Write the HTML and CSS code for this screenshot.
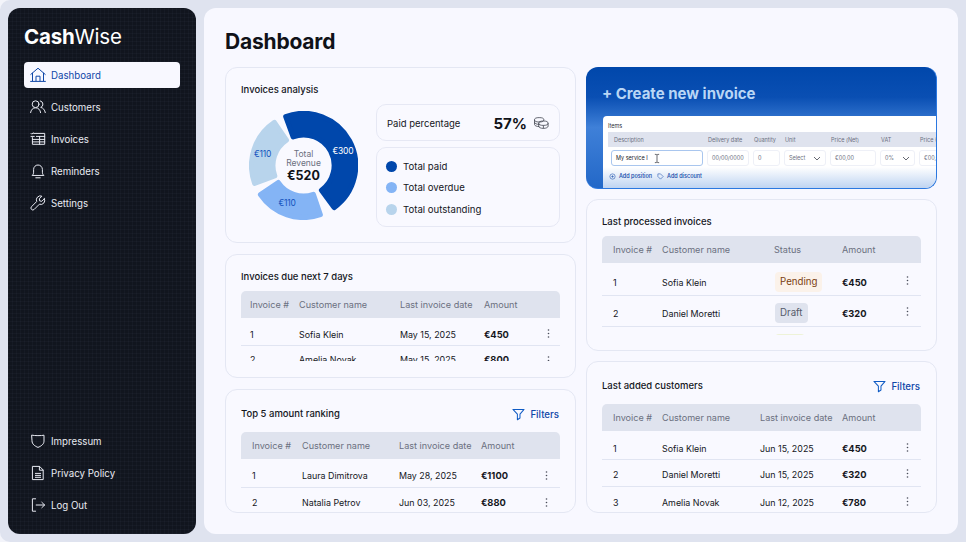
FILE: index.html
```html
<!DOCTYPE html>
<html lang="en">
<head>
<meta charset="utf-8">
<title>CashWise Dashboard</title>
<link rel="stylesheet" href="styles.css">
</head>
<body>
<svg class="defs" width="0" height="0" aria-hidden="true">
  <symbol id="kebab" viewBox="0 0 3 9"><circle cx="1.500" cy="1" r=".8"/><circle cx="1.500" cy="4.500" r=".8"/><circle cx="1.500" cy="8" r=".8"/></symbol>
  <symbol id="filter" viewBox="0 0 14 14"><path d="M1 1.500h12L8.600 6.600v4.200L5.800 12.600V6.600Z" fill="none" stroke="currentColor" stroke-width="1.100" stroke-linejoin="round"/></symbol>
</svg>
<div class="app">
  <aside class="sidebar">
    <div class="top">
      <div class="logo"><b>Cash</b>Wise</div>
      <nav class="nav">
        <a class="nav-item active"><svg class="ico" viewBox="0 0 16 16"><path d="M.8 7.400 8 1.200l7.200 6.200M2.500 6.200v7.600M13.500 6.200v7.600M.6 14.400h14.800M6 13.800V9.200h4v4.600"/></svg>Dashboard</a>
        <a class="nav-item"><svg class="ico" viewBox="0 0 16 16"><circle cx="5.600" cy="5.200" r="3.400"/><path d="M.6 13.600c.4-2.800 2.200-4.800 5-4.800s4.600 2 5 4.800M10.300 1.900a3.400 3.400 0 0 1 .4 6.500c2.400.4 4.100 2.500 4.600 5.200"/></svg>Customers</a>
        <a class="nav-item"><svg class="ico" viewBox="0 0 16 16"><path d="M3.600 2.400H14.700V13.300H2.400V6.600M1 2.400l.8.800L3.100 1.800M6.400 5.400h8.300M2.400 8.400h12.300M2.400 10.900h12.300M9.600 5.400v7.900M1 5.400h3.300"/></svg>Invoices</a>
        <a class="nav-item"><svg class="ico" viewBox="0 0 16 16"><path d="M2.400 12.200c.9-.8 1.200-1.500 1.200-3V6.400a4.400 4.400 0 0 1 8.800 0v2.800c0 1.500.3 2.200 1.200 3ZM5.800 14.800h4.400"/></svg>Reminders</a>
        <a class="nav-item"><svg class="ico" viewBox="0 0 16 16"><path d="M14.400 3.700 11.800 6.300 9.700 5.900 9.300 3.800 11.900 1.200A4 4 0 0 0 6.700 6.500L1.500 11.700a1.900 1.900 0 0 0 2.700 2.700L9.400 9.200A4 4 0 0 0 14.400 3.700Z"/></svg>Settings</a>
      </nav>
    </div>
    <nav class="nav">
      <a class="nav-item"><svg class="ico" viewBox="0 0 16 16"><path d="M2 2.200c2.200.6 9.800.6 12 0v6c0 3-3 5-6 6.200-3-1.200-6-3.200-6-6.200Z"/></svg>Impressum</a>
      <a class="nav-item"><svg class="ico" viewBox="0 0 16 16"><path d="M2.800 1.400h6.800l3.600 3.600v9.600H2.800ZM9.400 1.600v3.600h3.600M5.400 8.400h5.200M5.400 10.400h5.200M5.400 12.300h5.200"/></svg>Privacy Policy</a>
      <a class="nav-item"><svg class="ico" viewBox="0 0 16 16"><path d="M5.600 1.800H2.400v12.400h3.200M6.200 8h8.400M11.800 5.300 14.600 8l-2.800 2.700"/></svg>Log Out</a>
    </nav>
  </aside>

  <main class="main">
    <h1 class="page-title">Dashboard</h1>
    <div class="columns">
      <div class="col">
        <section class="card h-analysis">
          <h2 class="card-title">Invoices analysis</h2>
          <div class="analysis">
            <svg class="donut" viewBox="0 0 109 109">
              <path class="seg-dark" d="M36.700 5.600A52 52 0 0 1 85.100 96.600L72.400 79.200A30.500 30.500 0 0 0 44.100 25.800Z"/>
              <path class="seg-mid" d="M71.400 103.700A52 52 0 0 1 11.400 83.600L29.200 71.500A30.500 30.500 0 0 0 64.400 83.400Z"/>
              <path class="seg-light" d="M5.600 72.300A52 52 0 0 1 25.400 11.400L37.500 29.200A30.500 30.500 0 0 0 25.800 64.900Z"/>
              <text class="lbl lbl-w" x="94" y="43">€300</text>
              <text class="lbl" x="38" y="95">€110</text>
              <text class="lbl" x="13.500" y="46">€110</text>
              <text class="tot" x="54.500" y="46">Total</text>
              <text class="tot" x="54.500" y="55">Revenue</text>
              <text class="tot-v" x="54.500" y="68.500">€520</text>
            </svg>
            <div class="stats">
              <div class="box paid">
                <span>Paid percentage</span>
                <strong class="pct">57%</strong>
                <svg class="coins" viewBox="0 0 16 12"><ellipse cx="6.200" cy="2.800" rx="4.700" ry="2.200"/><path d="M1.500 2.800v2.400c0 1.200 2.100 2.200 4.700 2.200M1.500 5.200v2.200c0 1.200 2.100 2.200 4.700 2.200"/><ellipse cx="10.400" cy="6.200" rx="4.700" ry="2.200"/><path d="M5.700 6.200v3c0 1.200 2.100 2.200 4.700 2.200s4.700-1 4.700-2.200v-3M10.400 8.400v3"/></svg>
              </div>
              <div class="box legend">
                <div class="leg"><i class="dot dark"></i>Total paid</div>
                <div class="leg"><i class="dot mid"></i>Total overdue</div>
                <div class="leg"><i class="dot light"></i>Total outstanding</div>
              </div>
            </div>
          </div>
        </section>

        <section class="card h-short">
          <h2 class="card-title">Invoices due next 7 days</h2>
          <div class="tbl t-due clip-due">
            <div class="row head"><span>Invoice #</span><span>Customer name</span><span>Last invoice date</span><span>Amount</span></div>
            <div class="row r27 first"><span>1</span><span>Sofia Klein</span><span>May 15, 2025</span><b>€450</b><svg class="kebab"><use href="#kebab"/></svg></div>
            <div class="row r27"><span>2</span><span>Amelia Novak</span><span>May 15, 2025</span><b>€800</b><svg class="kebab"><use href="#kebab"/></svg></div>
          </div>
        </section>

        <section class="card h-short">
          <div class="card-head"><h2 class="card-title">Top 5 amount ranking</h2><a class="filters"><svg viewBox="0 0 14 14"><use href="#filter"/></svg>Filters</a></div>
          <div class="tbl t-top">
            <div class="row head"><span>Invoice #</span><span>Customer name</span><span>Last invoice date</span><span>Amount</span></div>
            <div class="row r27 first"><span>1</span><span>Laura Dimitrova</span><span>May 28, 2025</span><b>€1100</b><svg class="kebab"><use href="#kebab"/></svg></div>
            <div class="row r27"><span>2</span><span>Natalia Petrov</span><span>Jun 03, 2025</span><b>€880</b><svg class="kebab"><use href="#kebab"/></svg></div>
          </div>
        </section>
      </div>

      <div class="col col-r">
        <section class="banner">
          <div class="banner-title">+ Create new invoice</div>
          <div class="panel">
            <div class="items">Items</div>
            <div class="fgrid fhead"><span>Description</span><span>Delivery date</span><span>Quantity</span><span>Unit</span><span>Price (Net)</span><span>VAT</span><span>Price (Discount)</span></div>
            <div class="fgrid frow">
              <span class="f f-act">My service I<svg class="cursor" viewBox="0 0 7 11"><path d="M1 .7h1.600L3.500 1.500 4.400.7H6M3.500 1.500v8M1 10.300h1.600l.9-.8.9.8H6"/></svg></span>
              <span class="f">00/00/0000</span><span class="f">0</span>
              <span class="f">Select<svg class="chev" viewBox="0 0 8 5"><path d="M1 1l3 3 3-3"/></svg></span>
              <span class="f">€00,00</span>
              <span class="f">0%<svg class="chev" viewBox="0 0 8 5"><path d="M1 1l3 3 3-3"/></svg></span>
              <span class="f">€00,00</span>
            </div>
            <div class="adds">
              <span class="add"><svg viewBox="0 0 8 8"><circle cx="4" cy="4" r="3"/><path d="M4 2.500v3M2.500 4h3"/></svg>Add position</span>
              <span class="add"><svg viewBox="0 0 8 8"><path d="M1 1h3l3 3-3 3-3-3Z"/></svg>Add discount</span>
            </div>
          </div>
        </section>

        <section class="card h-tall">
          <h2 class="card-title">Last processed invoices</h2>
          <div class="tbl t-proc clip-proc">
            <div class="row head"><span>Invoice #</span><span>Customer name</span><span>Status</span><span>Amount</span></div>
            <div class="row r31 first"><span>1</span><span>Sofia Klein</span><span><em class="badge pending">Pending</em></span><b>€450</b><svg class="kebab"><use href="#kebab"/></svg></div>
            <div class="row r31"><span>2</span><span>Daniel Moretti</span><span><em class="badge draft">Draft</em></span><b>€320</b><svg class="kebab"><use href="#kebab"/></svg></div>
            <div class="row r31"><span>3</span><span>Amelia Novak</span><span><em class="badge ok">Paid</em></span><b>€780</b><svg class="kebab"><use href="#kebab"/></svg></div>
          </div>
        </section>

        <section class="card h-tall">
          <div class="card-head"><h2 class="card-title">Last added customers</h2><a class="filters"><svg viewBox="0 0 14 14"><use href="#filter"/></svg>Filters</a></div>
          <div class="tbl t-cust">
            <div class="row head"><span>Invoice #</span><span>Customer name</span><span>Last invoice date</span><span>Amount</span></div>
            <div class="row r27 first"><span>1</span><span>Sofia Klein</span><span>Jun 15, 2025</span><b>€450</b><svg class="kebab"><use href="#kebab"/></svg></div>
            <div class="row r27"><span>2</span><span>Daniel Moretti</span><span>Jun 15, 2025</span><b>€320</b><svg class="kebab"><use href="#kebab"/></svg></div>
            <div class="row r27"><span>3</span><span>Amelia Novak</span><span>Jun 12, 2025</span><b>€780</b><svg class="kebab"><use href="#kebab"/></svg></div>
          </div>
        </section>
      </div>
    </div>
  </main>
</div>
</body>
</html>
```

FILE: styles.css
```css
* { box-sizing: border-box; }
html, body { margin: 0; height: 100%; }
body {
  background: #f3f4fa;
  font-family: Inter, "Liberation Sans", sans-serif;
  color: #14161c;
  font-size: 10px;
  overflow: hidden;
}
.defs { position: absolute; }
.app { display: flex; gap: 8px; padding: 8px; height: 542px; background: #dfe3ef; border-radius: 10px 0 0 10px; }

/* sidebar */
.sidebar {
  width: 188px;
  flex: none;
  border-radius: 12px;
  padding: 15px 16px 16px;
  display: flex;
  flex-direction: column;
  justify-content: space-between;
  background-color: #11151e;
  background-image:
    repeating-linear-gradient(90deg, rgba(150,170,210,.035) 0 1px, transparent 1px 4px),
    repeating-linear-gradient(0deg, rgba(150,170,210,.035) 0 1px, transparent 1px 4px);
}
.logo { font-size: 20.500px; line-height: 28px; color: #fff; letter-spacing: -.2px; margin-bottom: 11px; }
.logo b { font-weight: 700; }
.nav { display: flex; flex-direction: column; gap: 6px; }
.nav-item {
  display: flex;
  align-items: center;
  gap: 5px;
  height: 26px;
  padding-left: 6px;
  color: #e8eaf2;
  border-radius: 4px;
  font-size: 9.700px;
}
.nav-item.active { background: #f8f8ff; color: #0f47a8; }
.ico { width: 16px; height: 16px; flex: none; fill: none; stroke: currentColor; stroke-width: 1; stroke-linejoin: round; stroke-linecap: round; }

/* main */
.main { flex: 1; min-width: 0; background: #f8f8ff; border-radius: 12px; padding: 0 21px; overflow: hidden; }
.page-title { margin: 22px 0 13px; font-size: 21px; line-height: 24px; font-weight: 700; color: #101218; letter-spacing: -.2px; }
.columns { display: grid; grid-template-columns: 351px 351px; gap: 10px; }
.col { display: flex; flex-direction: column; gap: 11px; }
.col-r { gap: 10px; }
.card { background: #f9f9ff; border: 1px solid #e4e7f3; border-radius: 12px; padding: 15px 15px 0; overflow: hidden; }
.h-analysis { height: 176px; }
.h-short { height: 124px; }
.h-tall { height: 152px; }
.card-title { margin: 0 0 7px; font-size: 9.500px; line-height: 14px; font-weight: 500; color: #14161c; }
.card-head { display: flex; justify-content: space-between; align-items: center; height: 16px; margin: 1px 0 10px; }
.card-head .card-title { margin: 0; }
.filters { display: flex; align-items: center; gap: 5px; color: #0f47a8; font-weight: 500; font-size: 9.700px; margin-right: 1px; }
.filters svg { width: 13px; height: 13px; color: #0f5bc4; }

/* analysis */
.analysis { display: flex; align-items: flex-start; gap: 18px; }
.donut { width: 109px; height: 109px; margin: 7px 0 0 8px; flex: none; }
.seg-dark { fill: #0047ab; stroke: #0047ab; stroke-width: 5; stroke-linejoin: round; }
.seg-mid { fill: #84b4f5; stroke: #84b4f5; stroke-width: 5; stroke-linejoin: round; }
.seg-light { fill: #b8d4ec; stroke: #b8d4ec; stroke-width: 5; stroke-linejoin: round; }
.lbl { font-size: 8.500px; fill: #1453bd; text-anchor: middle; letter-spacing: -.2px; }
.lbl-w { fill: #fff; }
.tot { font-size: 8.500px; fill: #6b7080; text-anchor: middle; }
.tot-v { font-size: 12.500px; font-weight: 700; fill: #101218; text-anchor: middle; }
.stats { width: 184px; display: flex; flex-direction: column; gap: 6px; }
.box { border: 1px solid #e6e8f4; border-radius: 10px; }
.paid { height: 37px; display: flex; align-items: center; padding: 1px 10px 0; font-size: 9.500px; }
.pct { margin-left: auto; font-size: 15px; font-weight: 700; color: #101218; }
.coins { width: 16px; height: 12px; margin-left: 6px; fill: none; stroke: #40444f; stroke-width: .8; }
.legend { height: 80px; display: flex; flex-direction: column; justify-content: center; gap: 10.500px; padding: 1px 0 0 9px; }
.leg { display: flex; align-items: center; gap: 6px; height: 11px; font-size: 9.600px; }
.dot { width: 11px; height: 11px; border-radius: 50%; display: block; }
.dot.dark { background: #0047ab; }
.dot.mid { background: #84b4f5; }
.dot.light { background: #b8d4ec; }

/* tables */
.row { display: grid; align-items: center; font-size: 8.900px; position: relative; }
.row svg.kebab { width: 3px; height: 9px; margin-top: 1px; fill: #4a4e5a; position: absolute; }
.row b { font-weight: 700; font-size: 9.300px; }
.head { height: 27px; background: #dfe3ee; border-radius: 5px 5px 0 0; color: #6b7080; font-size: 9.100px; }
.r27 { height: 27px; padding-top: 3px; border-bottom: 1px solid #e1e5f2; }
.r27:last-child { border-bottom: 0; }
.r27.first { height: 26px; margin-top: 3px; }
.r31 { height: 31px; padding-top: 4px; border-bottom: 1px solid #e1e5f2; }
.r31.first { margin-top: 2px; }
.t-due .row { grid-template-columns: 49px 101px 84px 1fr; padding-left: 9px; }
.t-due .first { margin-top: 2px; }
.t-due .r27:last-child { padding-top: 0; }
.t-due .kebab { left: 306px; }
.t-top .row { grid-template-columns: 50px 97px 82px 1fr; padding-left: 11px; }
.t-top .r27 { padding-top: 2px; }
.t-top .kebab { left: 304px; }
.t-proc .row { grid-template-columns: 49px 112px 68px 1fr; padding-left: 11px; }
.t-proc .kebab { left: 304px; }
.t-cust .row { grid-template-columns: 49px 98px 82px 1fr; padding-left: 11px; }
.t-cust .kebab { left: 304px; }
.clip-due { height: 70px; overflow: hidden; }
.clip-proc { height: 99px; overflow: hidden; }
.badge { display: inline-block; font-style: normal; font-size: 9.700px; line-height: 20px; padding: 0 5px; margin-left: 1px; border-radius: 4px; }
.pending { background: #fbf2ea; color: #7a3e10; }
.draft { background: #dfe3ee; color: #555b6b; }
.ok { background: #eef3d8; color: #56651a; }

/* banner */
.banner {
  height: 122px;
  border-radius: 12px;
  overflow: hidden;
  padding: 17px 0 0 16px;
  background: linear-gradient(180deg, #0047ab 0, #0a4fb3 25%, #3f80d8 50%, #2368c8 100%);
  border-bottom: 1px solid #2b78e0;
  border-right: 1px solid #2b78e0;
}
.banner-title { font-size: 15px; line-height: 20px; font-weight: 700; color: #b9d6f5; }
.panel {
  position: relative;
  margin: 12px 0 0 1px;
  height: 73px;
  background: #fff;
  border-radius: 4px 0 0 0;
  padding: 6px 0 0 5px;
  overflow: hidden;
  font-size: 5.500px;
}
.panel::after {
  content: "";
  position: absolute;
  left: 0; right: 0; bottom: 0;
  height: 22px;
  background: linear-gradient(180deg, rgba(255,255,255,0), #bcd2f1);
}
.items { line-height: 8px; margin-bottom: 2px; color: #2a2d36; }
.fgrid { display: grid; grid-template-columns: 92px 42px 27px 42px 46px 35px 70px; gap: 4px; white-space: nowrap; }
.fhead { height: 15px; align-items: center; background: #dfe3ee; color: #6b7080; padding-left: 3px; overflow: hidden; }
.fhead span { padding-left: 1px; }
.fhead span:first-child { padding-left: 3px; }
.frow { margin: 3px 0 0 3px; height: 16px; }
.f { display: flex; align-items: center; justify-content: space-between; border: 1px solid #eef0f7; border-radius: 3px; padding: 0 4px; color: #6b7080; font-size: 5.500px; }
.f-act { border-color: #a9c6ee; color: #20232c; justify-content: flex-start; }
.cursor { width: 6px; height: 11px; margin-left: 6px; fill: none; stroke: #20232c; stroke-width: .8; }
.chev { width: 8px; height: 5px; fill: none; stroke: #40444f; stroke-width: .8; }
.adds { display: flex; gap: 5px; margin: 6px 0 0 1px; color: #0f47a8; font-weight: 500; position: relative; z-index: 1; }
.add { display: flex; align-items: center; gap: 3px; line-height: 8px; }
.add svg { width: 7px; height: 7px; fill: none; stroke: #0f47a8; stroke-width: .6; }
```
